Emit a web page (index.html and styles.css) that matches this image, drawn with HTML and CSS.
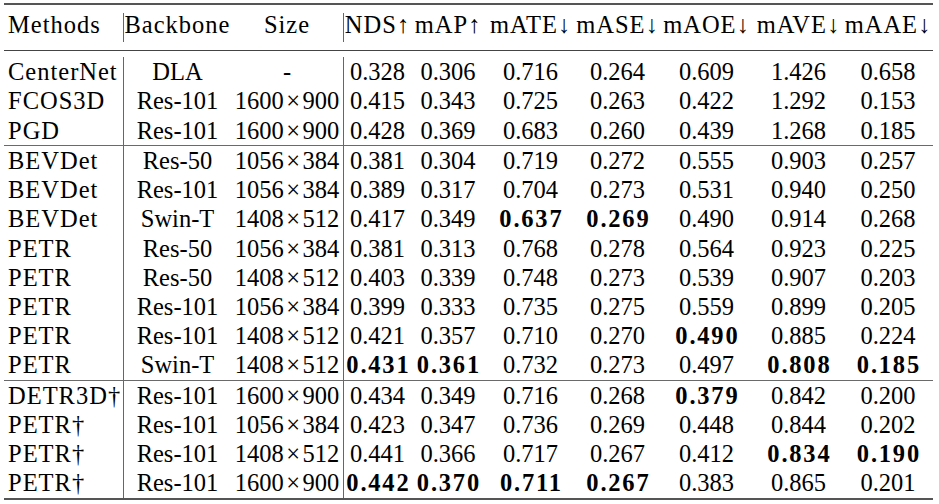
FILE: index.html
```html
<!DOCTYPE html>
<html lang="en">
<head>
<meta charset="utf-8">
<title>Results table</title>
<link rel="stylesheet" href="styles.css">
</head>
<body>
<div class="tbl">
  <div class="toprule"></div>
  <div class="row head">
    <div class="l w">Methods</div>
    <div class="c vl w">Backbone</div>
    <div class="c w">Size</div>
    <div class="c vl w">NDS↑</div>
    <div class="c w">mAP↑</div>
    <div class="c w">mATE↓</div>
    <div class="c w">mASE↓</div>
    <div class="c w">mAOE↓</div>
    <div class="c w">mAVE↓</div>
    <div class="c w">mAAE↓</div>
  </div>
  <div class="midrule"></div>

  <div class="group first">
    <div class="row"><div class="l w">CenterNet</div><div class="c vl">DLA</div><div class="c">-</div><div class="c vl">0.328</div><div class="c">0.306</div><div class="c">0.716</div><div class="c">0.264</div><div class="c">0.609</div><div class="c">1.426</div><div class="c">0.658</div></div>
    <div class="row"><div class="l w">FCOS3D</div><div class="c vl">Res-101</div><div class="c">1600<span class="x">×</span>900</div><div class="c vl">0.415</div><div class="c">0.343</div><div class="c">0.725</div><div class="c">0.263</div><div class="c">0.422</div><div class="c">1.292</div><div class="c">0.153</div></div>
    <div class="row"><div class="l w">PGD</div><div class="c vl">Res-101</div><div class="c">1600<span class="x">×</span>900</div><div class="c vl">0.428</div><div class="c">0.369</div><div class="c">0.683</div><div class="c">0.260</div><div class="c">0.439</div><div class="c">1.268</div><div class="c">0.185</div></div>
  </div>
  <div class="hline"></div>

  <div class="group">
    <div class="row"><div class="l w">BEVDet</div><div class="c vl">Res-50</div><div class="c">1056<span class="x">×</span>384</div><div class="c vl">0.381</div><div class="c">0.304</div><div class="c">0.719</div><div class="c">0.272</div><div class="c">0.555</div><div class="c">0.903</div><div class="c">0.257</div></div>
    <div class="row"><div class="l w">BEVDet</div><div class="c vl">Res-101</div><div class="c">1056<span class="x">×</span>384</div><div class="c vl">0.389</div><div class="c">0.317</div><div class="c">0.704</div><div class="c">0.273</div><div class="c">0.531</div><div class="c">0.940</div><div class="c">0.250</div></div>
    <div class="row"><div class="l w">BEVDet</div><div class="c vl">Swin-T</div><div class="c">1408<span class="x">×</span>512</div><div class="c vl">0.417</div><div class="c">0.349</div><div class="c"><b>0.637</b></div><div class="c"><b>0.269</b></div><div class="c">0.490</div><div class="c">0.914</div><div class="c">0.268</div></div>
    <div class="row"><div class="l w">PETR</div><div class="c vl">Res-50</div><div class="c">1056<span class="x">×</span>384</div><div class="c vl">0.381</div><div class="c">0.313</div><div class="c">0.768</div><div class="c">0.278</div><div class="c">0.564</div><div class="c">0.923</div><div class="c">0.225</div></div>
    <div class="row"><div class="l w">PETR</div><div class="c vl">Res-50</div><div class="c">1408<span class="x">×</span>512</div><div class="c vl">0.403</div><div class="c">0.339</div><div class="c">0.748</div><div class="c">0.273</div><div class="c">0.539</div><div class="c">0.907</div><div class="c">0.203</div></div>
    <div class="row"><div class="l w">PETR</div><div class="c vl">Res-101</div><div class="c">1056<span class="x">×</span>384</div><div class="c vl">0.399</div><div class="c">0.333</div><div class="c">0.735</div><div class="c">0.275</div><div class="c">0.559</div><div class="c">0.899</div><div class="c">0.205</div></div>
    <div class="row"><div class="l w">PETR</div><div class="c vl">Res-101</div><div class="c">1408<span class="x">×</span>512</div><div class="c vl">0.421</div><div class="c">0.357</div><div class="c">0.710</div><div class="c">0.270</div><div class="c"><b>0.490</b></div><div class="c">0.885</div><div class="c">0.224</div></div>
    <div class="row"><div class="l w">PETR</div><div class="c vl">Swin-T</div><div class="c">1408<span class="x">×</span>512</div><div class="c vl"><b>0.431</b></div><div class="c"><b>0.361</b></div><div class="c">0.732</div><div class="c">0.273</div><div class="c">0.497</div><div class="c"><b>0.808</b></div><div class="c"><b>0.185</b></div></div>
  </div>
  <div class="hline"></div>

  <div class="group">
    <div class="row"><div class="l w">DETR3D†</div><div class="c vl">Res-101</div><div class="c">1600<span class="x">×</span>900</div><div class="c vl">0.434</div><div class="c">0.349</div><div class="c">0.716</div><div class="c">0.268</div><div class="c"><b>0.379</b></div><div class="c">0.842</div><div class="c">0.200</div></div>
    <div class="row"><div class="l w">PETR†</div><div class="c vl">Res-101</div><div class="c">1056<span class="x">×</span>384</div><div class="c vl">0.423</div><div class="c">0.347</div><div class="c">0.736</div><div class="c">0.269</div><div class="c">0.448</div><div class="c">0.844</div><div class="c">0.202</div></div>
    <div class="row"><div class="l w">PETR†</div><div class="c vl">Res-101</div><div class="c">1408<span class="x">×</span>512</div><div class="c vl">0.441</div><div class="c">0.366</div><div class="c">0.717</div><div class="c">0.267</div><div class="c">0.412</div><div class="c"><b>0.834</b></div><div class="c"><b>0.190</b></div></div>
    <div class="row"><div class="l w">PETR†</div><div class="c vl">Res-101</div><div class="c">1600<span class="x">×</span>900</div><div class="c vl"><b>0.442</b></div><div class="c"><b>0.370</b></div><div class="c"><b>0.711</b></div><div class="c"><b>0.267</b></div><div class="c">0.383</div><div class="c">0.865</div><div class="c">0.201</div></div>
  </div>
  <div class="bottomrule"></div>
</div>
</body>
</html>
```

FILE: styles.css
```css
html, body {
  margin: 0;
  padding: 0;
  background: #ffffff;
}

body {
  font-family: "Liberation Serif", "Times New Roman", serif;
  font-size: 24.5px;
  color: #000000;
}

.tbl {
  width: 929px;
  margin-left: 4px;
  padding-top: 3px;
}

.toprule {
  height: 2px;
  background: #555555;
}

.midrule {
  height: 1.2px;
  margin-top: 8px;
  background: #444444;
}

.hline {
  height: 1.3px;
  background: #6a6a6a;
}

.bottomrule {
  height: 2px;
  background: #555555;
}

.group.first {
  margin-top: 6px;
}

.row {
  display: grid;
  grid-template-columns: 119px 108px 112px 68px 74px 91px 83px 95px 89px 90px;
  height: 29.2px;
  line-height: 29.2px;
  white-space: nowrap;
}

.row.head {
  margin-top: 8px;
  height: 29px;
  line-height: 23px;
}

.row.head > div {
  padding-bottom: 6px;
}

.row > div {
  box-sizing: border-box;
}

.l {
  text-align: left;
  padding-left: 4px;
}

.c {
  text-align: center;
}

.vl {
  border-left: 1.5px solid #666666;
}

.w {
  letter-spacing: 1px;
}

.x {
  margin: 0 2.5px;
}

b {
  font-weight: bold;
  letter-spacing: 1.8px;
  margin-right: -1.8px;
}
```
